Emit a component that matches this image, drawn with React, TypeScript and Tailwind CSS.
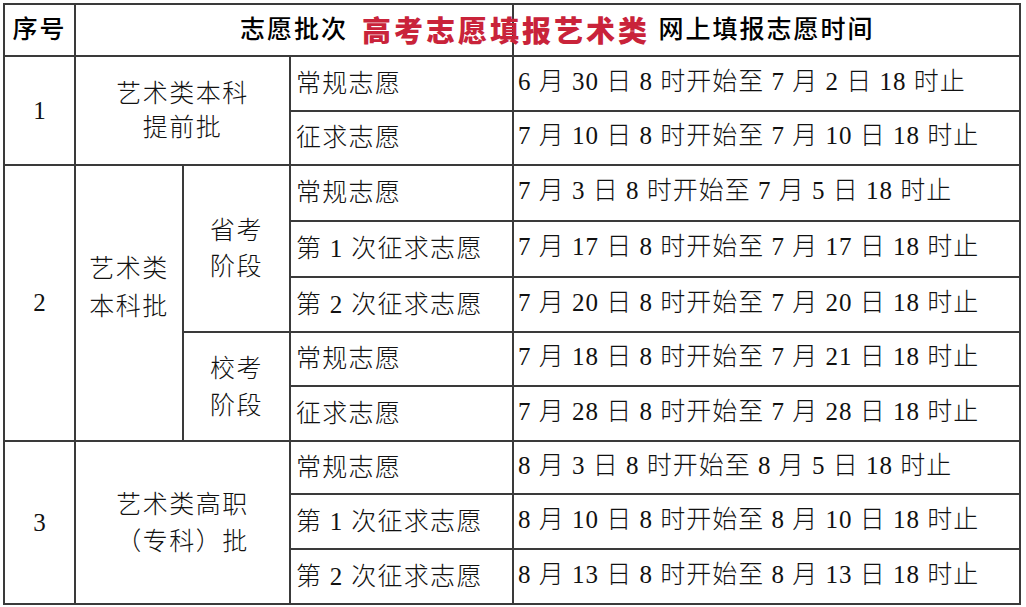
import React from "react";

const body = { fontFamily: "'Liberation Serif', 'Noto Sans CJK SC', serif" };

function Cell({
  children,
  className = "",
}: {
  children?: React.ReactNode;
  className?: string;
}) {
  return <div className={`bg-white flex items-center ${className}`}>{children}</div>;
}

const group1 = [
  ["常规志愿", "6 月 30 日 8 时开始至 7 月 2 日 18 时止"],
  ["征求志愿", "7 月 10 日 8 时开始至 7 月 10 日 18 时止"],
];
const group2a = [
  ["常规志愿", "7 月 3 日 8 时开始至 7 月 5 日 18 时止"],
  ["第 1 次征求志愿", "7 月 17 日 8 时开始至 7 月 17 日 18 时止"],
  ["第 2 次征求志愿", "7 月 20 日 8 时开始至 7 月 20 日 18 时止"],
];
const group2b = [
  ["常规志愿", "7 月 18 日 8 时开始至 7 月 21 日 18 时止"],
  ["征求志愿", "7 月 28 日 8 时开始至 7 月 28 日 18 时止"],
];
const group3 = [
  ["常规志愿", "8 月 3 日 8 时开始至 8 月 5 日 18 时止"],
  ["第 1 次征求志愿", "8 月 10 日 8 时开始至 8 月 10 日 18 时止"],
  ["第 2 次征求志愿", "8 月 13 日 8 时开始至 8 月 13 日 18 时止"],
];

function Rows({ rows, prefix }: { rows: string[][]; prefix: string }) {
  return (
    <>
      {rows.map((r, i) => (
        <React.Fragment key={prefix + i}>
          <Cell className="pl-[5px] tracking-[1.3px]">{r[0]}</Cell>
          <Cell className="pl-[4px] pb-[4px] tracking-[1px]">{r[1]}</Cell>
        </React.Fragment>
      ))}
    </>
  );
}

export default function App() {
  return (
    <div className="w-[1026px] h-[607px] bg-white pl-[3px] pt-[3px]">
      <div
        className="relative grid w-[1018px] bg-[#3a3a3a] p-[2px] gap-[2px] grid-cols-[69px_106px_105px_221px_505px] grid-rows-[50px_53px_52px_54px_54px_53px_52px_53px_51px_53px_53px] text-[25px] font-light text-[#111]"
        style={body}
      >
        {/* header */}
        <Cell className="justify-center font-medium tracking-[2px] text-black">序号</Cell>
        <Cell className="col-span-3 justify-center font-medium tracking-[2px] text-black">志愿批次</Cell>
        <Cell className="justify-center font-medium tracking-[2px] text-black">网上填报志愿时间</Cell>

        {/* group 1 */}
        <Cell className="row-span-2 justify-center">1</Cell>
        <Cell className="row-span-2 col-span-2 justify-center text-center leading-[34px] tracking-[1.5px]">
          艺术类本科<br />提前批
        </Cell>
        <Rows rows={group1} prefix="g1" />

        {/* group 2 */}
        <Cell className="row-span-5 justify-center">2</Cell>
        <Cell className="row-span-5 justify-center text-center leading-[38px] tracking-[1.5px] pb-[30px]">
          艺术类<br />本科批
        </Cell>
        <Cell className="row-span-3 justify-center text-center leading-[36px] tracking-[1.5px]">
          省考<br />阶段
        </Cell>
        <Rows rows={group2a} prefix="g2a" />
        <Cell className="row-span-2 justify-center text-center leading-[37px] tracking-[1.5px]">
          校考<br />阶段
        </Cell>
        <Rows rows={group2b} prefix="g2b" />

        {/* group 3 */}
        <Cell className="row-span-3 justify-center">3</Cell>
        <Cell className="row-span-3 col-span-2 justify-center text-center leading-[37px] tracking-[1.5px]">
          艺术类高职<br />（专科）批
        </Cell>
        <Rows rows={group3} prefix="g3" />

        {/* red overlay title */}
        <div
          className="absolute left-[359px] top-[8px] text-[29px] leading-[36px] font-black tracking-[3px] text-[#c9233a] whitespace-nowrap"
          style={{ fontFamily: "'Noto Sans CJK SC', sans-serif" }}
        >
          高考志愿填报艺术类
        </div>
      </div>
    </div>
  );
}
